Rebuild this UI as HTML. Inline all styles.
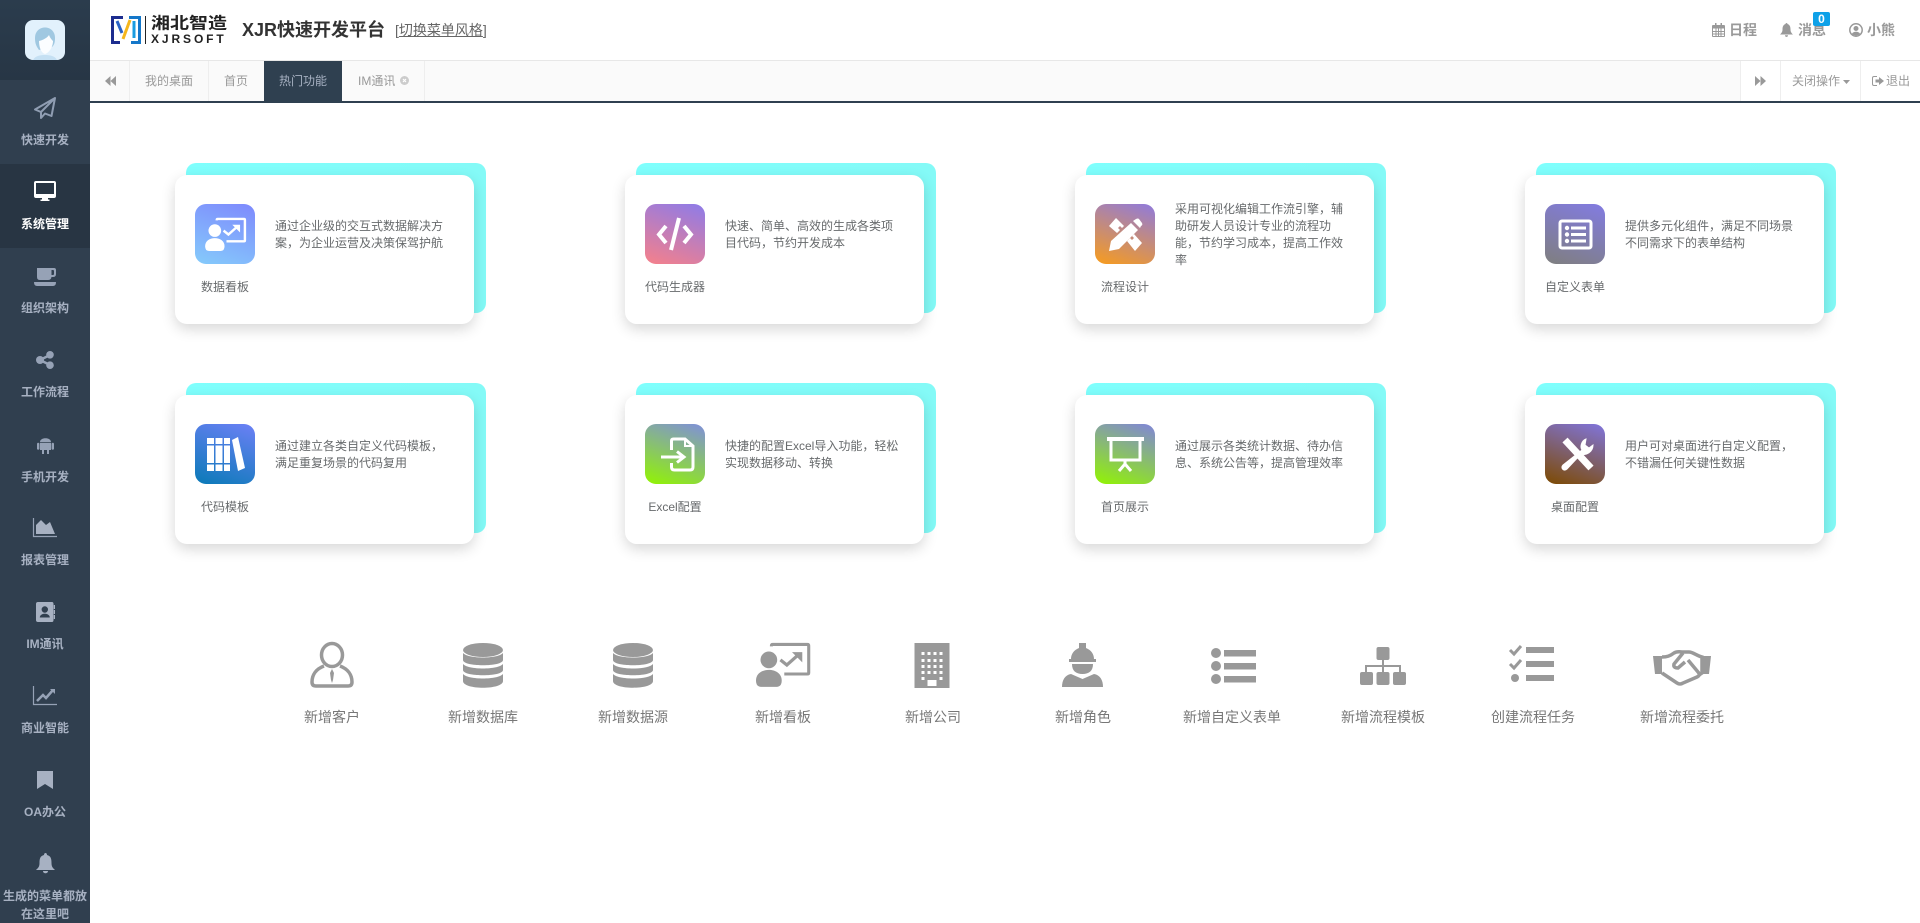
<!DOCTYPE html>
<html lang="zh"><head><meta charset="utf-8"><title>XJR快速开发平台</title>
<style>
*{box-sizing:border-box}
html,body{margin:0;padding:0;width:1920px;height:923px;overflow:hidden;background:#fff;font-family:"Liberation Sans","Noto Sans CJK SC",sans-serif;font-size:12px;color:#676a6c}
.a{position:absolute;white-space:nowrap}
svg{position:absolute;display:block;overflow:visible}
#side{position:absolute;left:0;top:0;width:90px;height:923px;background:#303f4f;overflow:hidden}
#top{position:absolute;left:0;top:0;width:90px;height:80px;background:linear-gradient(#2b3c4d,#273645)}
#act{position:absolute;left:0;top:164px;width:90px;height:84px;background:#283543}
.m{position:absolute;left:0;width:90px;text-align:center;font-weight:bold;font-size:12px;line-height:18px;color:#a7b1c2}
.tab{position:absolute;top:61px;height:40px;line-height:40px;color:#999}
.sep{position:absolute;top:61px;width:1px;height:40px;background:#eee}
.hd{position:absolute;top:21px;line-height:18px;font-size:14px;font-weight:bold;color:#999}
.cy{position:absolute;width:300px;height:150px;border-radius:10px;background:linear-gradient(90deg,#7ffffd,#84faf7)}
.cd{position:absolute;width:299px;height:149px;border-radius:12px;background:#fff;box-shadow:0 5px 14px rgba(0,0,0,.16)}
.ic{position:absolute;width:60px;height:60px;border-radius:11px}
.lb{position:absolute;width:100px;text-align:center;line-height:18px;color:#676a6c;white-space:nowrap}
.ds{position:absolute;line-height:17px;color:#676a6c;white-space:nowrap}
.bt{position:absolute;width:150px;top:708px;text-align:center;line-height:18px;font-size:14px;color:#777;white-space:nowrap}
</style></head><body>

<div id="side">
<div id="top"></div>
<div id="act"></div>
<svg style="left:25px;top:20px" width="40" height="40" viewBox="0 0 40 40"><rect width="40" height="40" rx="8" fill="#e2f1fc"/><path d="M10 18C10 4 30 4 30 18C30 23 29 25 27 27L14 30C11 26 10 23 10 18Z" fill="#a0c8e1"/><path d="M14 21C18 20 22 18 24 15C25 18 27 20 28 21C28 27 24 33 20 34C16 33 14 27 14 21Z" fill="#fbfdff"/><path d="M8 40C10 36 15 35 20 35C25 35 30 36 32 40Z" fill="#c5e0f3"/></svg>
<svg style="left:34px;top:97px" width="22" height="22" viewBox="0 0 22 22" fill="none" stroke="#8f9db2" stroke-width="2" stroke-linejoin="round"><path d="M21 1L1 12.500L7 15L21 1L17.500 19L11 16.500L7 21L7 15"/></svg>
<div class="m" style="top:131px">快速开发</div>
<svg style="left:34px;top:181px" width="22" height="20" viewBox="0 0 22 20"><path d="M2 0H20Q22 0 22 2V15Q22 17 20 17H14V18.500H15.500V20H6.500V18.500H8V17H2Q0 17 0 15V2Q0 0 2 0ZM2 2V13H20V2Z" fill="#fff" fill-rule="evenodd"/></svg>
<div class="m" style="top:215px;color:#fff">系统管理</div>
<svg style="left:34px;top:268px" width="22" height="18" viewBox="0 0 22 18" fill="#96a2b6"><path d="M3 0H20Q22 0 22 2V6Q22 9 19 9H17.500Q17 12 14 12H6Q3 12 3 9ZM17.500 2V7H19Q20 7 20 6V3Q20 2 19 2Z" fill-rule="evenodd"/><path d="M0 14H22Q22 18 19 18H3Q0 18 0 14Z"/></svg>
<div class="m" style="top:299px">组织架构</div>
<svg style="left:36px;top:351px" width="18" height="18" viewBox="0 0 18 18"><path d="M14 4L4 9L14 14" stroke="#96a2b6" stroke-width="2.500" fill="none"/><circle cx="14" cy="3.800" r="3.800" fill="#96a2b6"/><circle cx="4" cy="9" r="4" fill="#96a2b6"/><circle cx="14" cy="14.200" r="3.800" fill="#96a2b6"/></svg>
<div class="m" style="top:383px">工作流程</div>
<svg style="left:37px;top:435px" width="17" height="20" viewBox="0 0 17 20" fill="#96a2b6"><path d="M3 7C3 2 14 2 14 7ZM3 7.800H14V15H12V19H10V15H7V19H5V15H3Z"/><rect x="0" y="7.800" width="2.400" height="7" rx="1.200"/><rect x="14.600" y="7.800" width="2.400" height="7" rx="1.200"/></svg>
<div class="m" style="top:468px">手机开发</div>
<svg style="left:33px;top:518px" width="24" height="19" viewBox="0 0 24 19"><path d="M.5 0V18.500H24" stroke="#96a2b6" fill="none" stroke-width="1.200"/><path d="M3 16V7L8 2L13 7L17 4L22 16Z" fill="#a7b1c2"/></svg>
<div class="m" style="top:551px">报表管理</div>
<svg style="left:36px;top:602px" width="19" height="20" viewBox="0 0 19 20" fill="#a7b1c2"><path d="M2 0H16Q17.500 0 17.500 2V18Q17.500 20 16 20H2Q0 20 0 18V2Q0 0 2 0Z"/><rect x="17.800" y="3" width="1.200" height="4"/><rect x="17.800" y="8" width="1.200" height="4"/><rect x="17.800" y="13" width="1.200" height="4"/><circle cx="8.800" cy="7.500" r="3.200" fill="#303f4f"/><path d="M3.800 15.500C3.800 10.500 13.800 10.500 13.800 15.500Z" fill="#303f4f"/></svg>
<div class="m" style="top:635px">IM通讯</div>
<svg style="left:33px;top:686px" width="24" height="19" viewBox="0 0 24 19" fill="none" stroke="#96a2b6"><path d="M.5 0V18.500H24" stroke-width="1.200"/><path d="M4 15L10 9L13 12L20 4" stroke-width="2.500"/><path d="M17 3H22V8Z" fill="#96a2b6" stroke="none"/></svg>
<div class="m" style="top:719px">商业智能</div>
<svg style="left:37px;top:771px" width="16" height="18" viewBox="0 0 16 18"><path d="M0 0H16V18L8 13L0 18Z" fill="#a7b1c2"/></svg>
<div class="m" style="top:803px">OA办公</div>
<svg style="left:36px;top:853px" width="19" height="21" viewBox="0 0 19 21"><path d="M9.500 0C10.500 0 11 1 11 2C15 3 15.500 6 15.500 10C15.500 14 17 15 19 17H0C2 15 3.500 14 3.500 10C3.500 6 4 3 8 2C8 1 8.500 0 9.500 0ZM7 18H12C12 21 7 21 7 18Z" fill="#a7b1c2"/></svg>
<div class="m" style="top:887px;left:0;width:90px;white-space:nowrap">生成的菜单都放<br>在这里吧</div>
</div>

<svg style="left:111px;top:16px" width="30" height="28" viewBox="0 0 30 28" fill="none"><path d="M12 1.500H1.500V26.500H9" stroke="#1d2d8f" stroke-width="3"/><path d="M18 1.500H28.500V26.500H20" stroke="#1477c9" stroke-width="3"/><path d="M6 5L11 17" stroke="#2a63c6" stroke-width="3"/><path d="M12 23L19 4" stroke="#f5b61c" stroke-width="3"/><path d="M23 5V22" stroke="#1b9ce0" stroke-width="3"/></svg>
<div class="a" style="left:145px;top:16px;width:1px;height:28px;background:#222"></div>
<div class="a" style="left:151px;top:13px;font-size:19px;font-weight:bold;line-height:22px;color:#222;transform:scaleY(.85);transform-origin:0 50%">湘北智造</div>
<div class="a" style="left:151px;top:33px;font-size:12px;font-weight:bold;line-height:12px;color:#222;letter-spacing:2.900px">XJRSOFT</div>
<div class="a" style="left:242px;top:18px;font-size:18px;font-weight:bold;line-height:24px;color:#333">XJR快速开发平台</div>
<div class="a" style="left:395px;top:21px;font-size:14px;line-height:18px;color:#666">[<span style="text-decoration:underline">切换菜单风格</span>]</div>

<svg style="left:1712px;top:23px" width="13" height="14" viewBox="0 0 13 14"><path d="M1 2H12Q13 2 13 3V13Q13 14 12 14H1Q0 14 0 13V3Q0 2 1 2ZM1 5.500V13H12V5.500Z" fill="#999" fill-rule="evenodd"/><path d="M3 0H4.500V3H3ZM8.500 0H10V3H8.500ZM1 8H12V9H1ZM1 10.500H12V11.500H1ZM3.500 5.500H4.500V13H3.500ZM6 5.500H7V13H6ZM8.500 5.500H9.500V13H8.500Z" fill="#999"/></svg>
<div class="hd" style="left:1729px">日程</div>
<svg style="left:1780px;top:23px" width="13" height="14" viewBox="0 0 13 14"><path d="M6.500 0C7.200 0 7.500 .5 7.500 1C10 2 10.500 4 10.500 6.500C10.500 9 11.500 10 13 11.500H0C1.500 10 2.500 9 2.500 6.500C2.500 4 3 2 5.500 1C5.500 .5 5.800 0 6.500 0ZM5 12.200H8C8 14.500 5 14.500 5 12.200Z" fill="#999"/></svg>
<div class="hd" style="left:1798px">消息</div>
<div class="a" style="left:1813px;top:12px;width:17px;height:14px;background:#0ea1e8;border-radius:2px;color:#fff;font-size:12px;font-weight:bold;line-height:14px;text-align:center">0</div>
<svg style="left:1849px;top:23px" width="14" height="14" viewBox="0 0 14 14"><circle cx="7" cy="7" r="6.200" fill="none" stroke="#999" stroke-width="1.500"/><circle cx="7" cy="5.500" r="2.500" fill="#999"/><path d="M3 11C3.500 8 10.500 8 11 11C9 13 5 13 3 11Z" fill="#999"/></svg>
<div class="hd" style="left:1867px">小熊</div>

<div class="a" style="left:90px;top:60px;width:1830px;height:1px;background:#e7e7e7"></div>
<div class="a" style="left:90px;top:61px;width:1830px;height:40px;background:#fafafa"></div>
<div class="a" style="left:1740px;top:61px;width:180px;height:40px;background:#fff"></div>
<div class="a" style="left:90px;top:101px;width:1830px;height:2px;background:#2f4050"></div>
<div class="sep" style="left:129px"></div><div class="sep" style="left:208px"></div><div class="sep" style="left:424px"></div>
<div class="sep" style="left:1740px"></div><div class="sep" style="left:1780px"></div><div class="sep" style="left:1860px"></div>
<svg style="left:105px;top:76px" width="11" height="10" viewBox="0 0 11 10" fill="#999"><path d="M5.500 0V10L0 5ZM11 0V10L5.500 5Z"/></svg>
<div class="tab" style="left:145px">我的桌面</div>
<div class="tab" style="left:224px">首页</div>
<div class="a" style="left:264px;top:61px;width:78px;height:41px;background:#2f4050"></div>
<div class="tab" style="left:279px;color:#a7b1c2">热门功能</div>
<div class="tab" style="left:358px">IM通讯</div>
<svg style="left:400px;top:76px" width="9" height="9" viewBox="0 0 9 9"><circle cx="4.500" cy="4.500" r="4.500" fill="#ccc"/><path d="M3 3L6 6M6 3L3 6" stroke="#fff" stroke-width="1.200"/></svg>
<svg style="left:1755px;top:76px" width="11" height="10" viewBox="0 0 11 10" fill="#999"><path d="M0 0V10L5.500 5ZM5.500 0V10L11 5Z"/></svg>
<div class="tab" style="left:1792px">关闭操作</div>
<svg style="left:1843px;top:80px" width="7" height="4" viewBox="0 0 7 4"><path d="M0 0H7L3.500 4Z" fill="#999"/></svg>
<svg style="left:1872px;top:76px" width="12" height="10" viewBox="0 0 12 10"><path d="M5 .5H2Q.5 .5 .5 2V8Q.5 9.500 2 9.500H5" stroke="#999" fill="none"/><path d="M3.500 3.500H7V1L12 5L7 9V6.500H3.500Z" fill="#999"/></svg>
<div class="tab" style="left:1886px">退出</div>

<div class="cy" style="left:186px;top:163px"></div><div class="cd" style="left:174.500px;top:175px"></div>
<div class="cy" style="left:636px;top:163px"></div><div class="cd" style="left:624.500px;top:175px"></div>
<div class="cy" style="left:1086px;top:163px"></div><div class="cd" style="left:1074.500px;top:175px"></div>
<div class="cy" style="left:1536px;top:163px"></div><div class="cd" style="left:1524.500px;top:175px"></div>
<div class="cy" style="left:186px;top:383px"></div><div class="cd" style="left:174.500px;top:395px"></div>
<div class="cy" style="left:636px;top:383px"></div><div class="cd" style="left:624.500px;top:395px"></div>
<div class="cy" style="left:1086px;top:383px"></div><div class="cd" style="left:1074.500px;top:395px"></div>
<div class="cy" style="left:1536px;top:383px"></div><div class="cd" style="left:1524.500px;top:395px"></div>

<!-- card 1 -->
<div class="ic" style="left:195px;top:204px;background:linear-gradient(20deg,#85cbfb,#7e89fd)"></div>
<svg style="left:205px;top:218px" width="41" height="33" viewBox="0 0 42 34" fill="none"><path d="M12 2.500V2Q12 1 13 1H40Q41 1 41 2V23Q41 24 40 24H22" stroke="#fff" stroke-width="2.500"/><circle cx="10" cy="13" r="6.500" fill="#fff"/><path d="M0 29C0 18 20 18 20 29Q20 34 16 34H4Q0 34 0 29Z" fill="#fff"/><path d="M19 13L24 17L33 9" stroke="#fff" stroke-width="2.500"/><path d="M28 7H36V15Z" fill="#fff"/></svg>
<div class="lb" style="left:175px;top:278px">数据看板</div>
<div class="ds" style="left:275px;top:218px">通过企业级的交互式数据解决方<br>案，为企业运营及决策保驾护航</div>
<!-- card 2 -->
<div class="ic" style="left:645px;top:204px;background:linear-gradient(20deg,#f6808a,#8d7be9)"></div>
<svg style="left:645px;top:204px" width="60" height="60" viewBox="0 0 60 60" fill="none" stroke="#fff" stroke-width="4"><path d="M21 22L14 30.500L21 39M39 22L46 30.500L39 39"/><path d="M34 14L26 46" stroke-width="4"/></svg>
<div class="lb" style="left:625px;top:278px">代码生成器</div>
<div class="ds" style="left:725px;top:218px">快速、简单、高效的生成各类项<br>目代码，节约开发成本</div>
<!-- card 3 -->
<div class="ic" style="left:1095px;top:204px;background:linear-gradient(20deg,#f89c1c,#8f7add)"></div>
<svg style="left:1095px;top:204px" width="60" height="60" viewBox="0 0 60 60" fill="#fff"><path d="M14 47L16 37L36 19L43 26L24 45Z"/><path d="M38 17L41 15Q43 14 44 15L47 19Q48 21 46 22L45 24Z"/><path d="M14 22L21 14L29 22L27 24L25 22L23 24L25 26L22 29ZM32 37L35 34L37 36L39 34L37 32L39 30L47 39L40 47Z"/></svg>
<div class="lb" style="left:1075px;top:278px">流程设计</div>
<div class="ds" style="left:1175px;top:201px">采用可视化编辑工作流引擎，辅<br>助研发人员设计专业的流程功<br>能，节约学习成本，提高工作效<br>率</div>
<!-- card 4 -->
<div class="ic" style="left:1545px;top:204px;background:linear-gradient(20deg,#7f7f7f,#827be2)"></div>
<svg style="left:1545px;top:204px" width="60" height="60" viewBox="0 0 60 60"><rect x="15" y="17" width="31" height="27" rx="2" fill="none" stroke="#fff" stroke-width="3"/><circle cx="22" cy="24" r="2.200" fill="#fff"/><circle cx="22" cy="30.500" r="2.200" fill="#fff"/><circle cx="22" cy="37" r="2.200" fill="#fff"/><path d="M26 22.500H41V25.500H26ZM26 29H41V32H26ZM26 35.500H41V38.500H26Z" fill="#fff"/></svg>
<div class="lb" style="left:1525px;top:278px">自定义表单</div>
<div class="ds" style="left:1625px;top:218px">提供多元化组件，满足不同场景<br>不同需求下的表单结构</div>
<!-- card 5 -->
<div class="ic" style="left:195px;top:424px;background:linear-gradient(20deg,#0a7ab7,#6c80f6)"></div>
<svg style="left:195px;top:424px" width="60" height="60" viewBox="0 0 60 60" fill="#fff"><path d="M12 14H19V20H12ZM12 21.500H19V39H12ZM12 40.500H19V47H12ZM20.500 14H27.500V20H20.500ZM20.500 21.500H27.500V39H20.500ZM20.500 40.500H27.500V47H20.500ZM29 14H35V20H29ZM29 21.500H35V39H29ZM29 40.500H35V47H29Z"/><path d="M37 16L43 13L50 44L43 47Z"/></svg>
<div class="lb" style="left:175px;top:498px">代码模板</div>
<div class="ds" style="left:275px;top:438px">通过建立各类自定义代码模板，<br>满足重复场景的代码复用</div>
<!-- card 6 -->
<div class="ic" style="left:645px;top:424px;background:linear-gradient(20deg,#92f500,#7f8fdb)"></div>
<svg style="left:645px;top:424px" width="60" height="60" viewBox="0 0 60 60" fill="none" stroke="#fff" stroke-width="3"><path d="M26.500 26V17Q26.500 15 28.500 15H40L48 22V43Q48 46 45 46H29.500Q26.500 46 26.500 43V39"/><path d="M40 15V22H48" stroke-width="2"/><path d="M16 33H38"/><path d="M32 27.500L39 33L32 38.500"/></svg>
<div class="lb" style="left:625px;top:498px">Excel配置</div>
<div class="ds" style="left:725px;top:438px">快捷的配置Excel导入功能，轻松<br>实现数据移动、转换</div>
<!-- card 7 -->
<div class="ic" style="left:1095px;top:424px;background:linear-gradient(20deg,#92f500,#8085da)"></div>
<svg style="left:1095px;top:424px" width="60" height="60" viewBox="0 0 60 60" fill="none" stroke="#fff" stroke-width="3"><path d="M12 15H49" stroke-width="4"/><path d="M16 17V36H45V17"/><path d="M30 36V42M30 40L24 47M30 40L36 47"/></svg>
<div class="lb" style="left:1075px;top:498px">首页展示</div>
<div class="ds" style="left:1175px;top:438px">通过展示各类统计数据、待办信<br>息、系统公告等，提高管理效率</div>
<!-- card 8 -->
<div class="ic" style="left:1545px;top:424px;background:linear-gradient(20deg,#7d4a00,#8075dd)"></div>
<svg style="left:1545px;top:424px" width="60" height="60" viewBox="0 0 60 60" fill="none" stroke="#fff"><path d="M20 16L46 44" stroke-width="7"/><path d="M41 15C36 17 35 23 37 26L18 41C15 44 19 48 22 45L36 30C41 32 48 28 48 21L44 24L40 21Z" fill="#fff" stroke="#fff" stroke-width="1"/></svg>
<div class="lb" style="left:1525px;top:498px">桌面配置</div>
<div class="ds" style="left:1625px;top:438px">用户可对桌面进行自定义配置，<br>不错漏任何关键性数据</div>

<!-- bottom -->
<svg style="left:310px;top:642px" width="44" height="46" viewBox="0 0 44 46" fill="none" stroke="#999" stroke-width="3.500"><ellipse cx="22" cy="13" rx="10.500" ry="11.500"/><path d="M14 24C6 27 2 33 2 40Q2 44 6 44H38Q42 44 42 40C42 33 38 27 30 24"/><path d="M22 27L20 31L21 38L22 41L23 38L24 31Z" fill="#999" stroke="none"/></svg>
<div class="bt" style="left:257px">新增客户</div>

<svg style="left:463px;top:643px" width="40" height="45" viewBox="0 0 40 45" fill="#999"><ellipse cx="20" cy="7" rx="20" ry="7"/><path d="M0 10C5 16 35 16 40 10V17C40 24 0 24 0 17Z"/><path d="M0 21C5 27 35 27 40 21V27C40 34 0 34 0 27Z"/><path d="M0 31C5 37 35 37 40 31V38C40 47 0 47 0 38Z"/></svg>
<div class="bt" style="left:408px">新增数据库</div>

<svg style="left:613px;top:643px" width="40" height="45" viewBox="0 0 40 45" fill="#999"><ellipse cx="20" cy="7" rx="20" ry="7"/><path d="M0 10C5 16 35 16 40 10V17C40 24 0 24 0 17Z"/><path d="M0 21C5 27 35 27 40 21V27C40 34 0 34 0 27Z"/><path d="M0 31C5 37 35 37 40 31V38C40 47 0 47 0 38Z"/></svg>
<div class="bt" style="left:558px">新增数据源</div>

<svg style="left:756px;top:643px" width="54" height="44" viewBox="0 0 42 34" fill="none"><path d="M12 2.500V2Q12 1 13 1H40Q41 1 41 2V23Q41 24 40 24H22" stroke="#999" stroke-width="2.400"/><circle cx="10" cy="13" r="6.500" fill="#999"/><path d="M0 29C0 18 20 18 20 29Q20 34 16 34H4Q0 34 0 29Z" fill="#999"/><path d="M19 13L24 17L33 9" stroke="#999" stroke-width="2.500"/><path d="M28 7H36V15Z" fill="#999"/></svg>
<div class="bt" style="left:708px">新增看板</div>

<svg style="left:914px;top:643px" width="36" height="45" viewBox="0 0 35 45"><rect width="35" height="45" fill="#999"/><g fill="#fff"><rect x="7" y="9" width="3" height="3"/><rect x="13" y="9" width="3" height="3"/><rect x="19" y="9" width="3" height="3"/><rect x="25" y="9" width="3" height="3"/><rect x="7" y="16" width="3" height="3"/><rect x="13" y="16" width="3" height="3"/><rect x="19" y="16" width="3" height="3"/><rect x="25" y="16" width="3" height="3"/><rect x="7" y="22" width="3" height="3"/><rect x="13" y="22" width="3" height="3"/><rect x="19" y="22" width="3" height="3"/><rect x="25" y="22" width="3" height="3"/><rect x="7" y="28" width="3" height="3"/><rect x="13" y="28" width="3" height="3"/><rect x="19" y="28" width="3" height="3"/><rect x="25" y="28" width="3" height="3"/><rect x="7" y="34" width="3" height="3"/><rect x="25" y="34" width="3" height="3"/><rect x="13" y="37" width="9" height="6"/></g></svg>
<div class="bt" style="left:858px">新增公司</div>

<svg style="left:1062px;top:642px" width="41" height="45" viewBox="0 0 41 45" fill="#999"><path d="M17 1H24V6C29 8 32 12 32 17H34V20H7V17H9C9 12 12 8 17 6Z"/><path d="M10 22H31C31 29 27 32 20.500 32C14 32 10 29 10 22Z"/><path d="M9 32L20.500 37L32 32C38 33 41 38 41 45H0C0 38 3 33 9 32Z"/></svg>
<div class="bt" style="left:1008px">新增角色</div>

<svg style="left:1211px;top:647px" width="45" height="37" viewBox="0 0 45 37" fill="#999"><circle cx="5" cy="6" r="5"/><circle cx="5" cy="19" r="5"/><circle cx="5" cy="32" r="5"/><rect x="13" y="3" width="32" height="6.500"/><rect x="13" y="16" width="32" height="6.500"/><rect x="13" y="29" width="32" height="6.500"/></svg>
<div class="bt" style="left:1157px">新增自定义表单</div>

<svg style="left:1360px;top:647px" width="46" height="38" viewBox="0 0 46 38" fill="#999"><rect x="16.500" y="0" width="13" height="13" rx="2"/><rect x="0" y="25" width="13" height="13" rx="2"/><rect x="16.500" y="25" width="13" height="13" rx="2"/><rect x="33" y="25" width="13" height="13" rx="2"/><path d="M22 13H24V18H41V25H39V20H24V25H22V20H7V25H5V18H22Z"/></svg>
<div class="bt" style="left:1308px">新增流程模板</div>

<svg style="left:1509px;top:644px" width="45" height="40" viewBox="0 0 45 40" fill="none" stroke="#999"><path d="M1 6L5 10L12 2M1 20L5 24L12 16" stroke-width="3"/><circle cx="6" cy="34" r="4" fill="#999" stroke="none"/><path d="M17 3H45V9H17ZM17 17H45V23H17ZM17 31H45V37H17Z" fill="#999" stroke="none"/></svg>
<div class="bt" style="left:1458px">创建流程任务</div>

<svg style="left:1653px;top:650px" width="58" height="36" viewBox="0 0 58 36" fill="none" stroke="#999" stroke-width="3.500"><path d="M0 6H9V24H2ZM58 6H49V24H56Z" fill="#999" stroke="none"/><path d="M9 7C14 7 17 6 21 3C24 1 27 2 30 2H36C40 2 44 6 49 7V23L46 25"/><path d="M9 23L24 33Q27 35 30 33L44 27Q48 25 45 22L35 10"/><path d="M30 3L21 14Q20 18 25 18L32 12"/></svg>
<div class="bt" style="left:1607px">新增流程委托</div>
</body></html>
